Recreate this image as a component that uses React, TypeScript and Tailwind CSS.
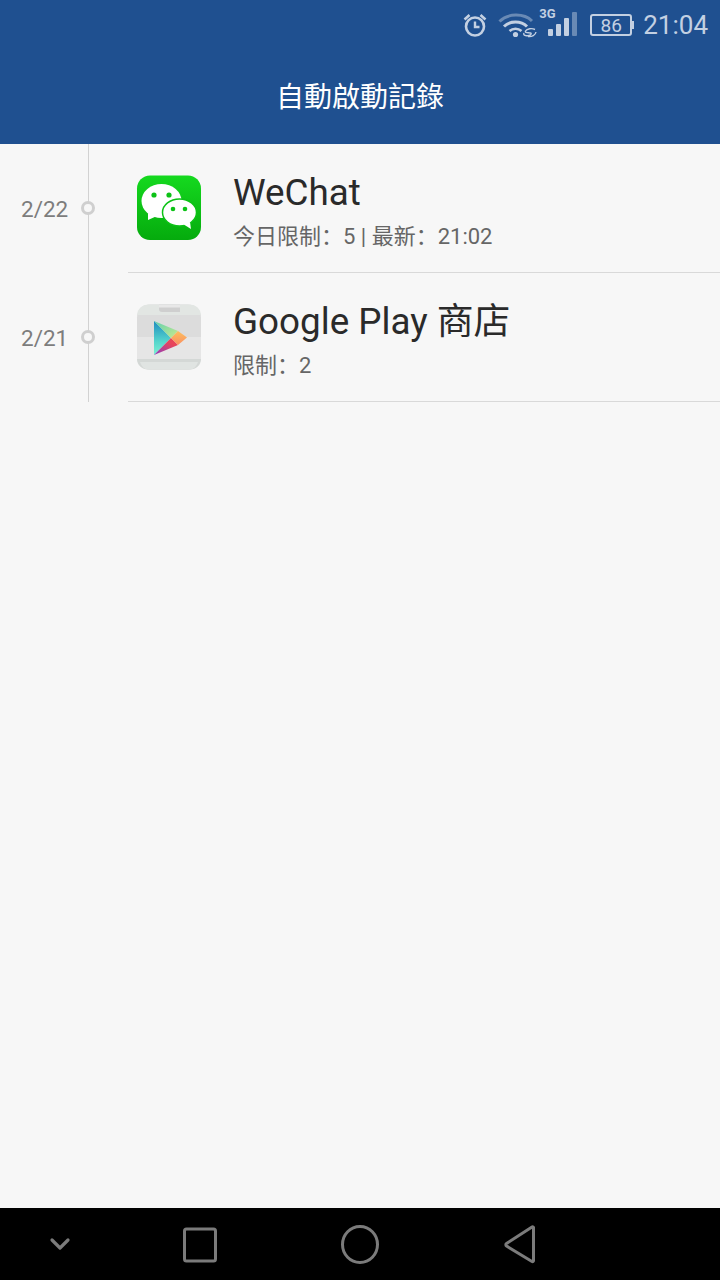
import React from 'react';

const FONT = 'font-["Roboto","Noto_Sans_CJK_SC",sans-serif]';

function StatusBar() {
  return (
    <div className="flex h-[48px] items-center justify-end pr-[12px] pt-[2px] text-[#c3d0e2]">
      {/* alarm */}
      <svg width="26" height="26" viewBox="0 0 26 26" fill="none" stroke="currentColor" className="mr-[10px]">
        <circle cx="13" cy="14.500" r="9" strokeWidth="2.600" />
        <path d="M13 9.500v5.500h4.500" strokeWidth="2.400" />
        <path d="M2.500 7.500 7.500 3M23.500 7.500 18.500 3" strokeWidth="2.600" />
      </svg>
      {/* wifi */}
      <svg width="40" height="26" viewBox="0 0 40 26" fill="none" className="mr-[1px]">
        <path d="M1.500 9.500C10 1 26 1 34 9" stroke="currentColor" strokeOpacity="0.45" strokeWidth="3" />
        <path d="M6 14.500c6-6 17-6 23 0" stroke="currentColor" strokeWidth="3" />
        <path d="M11.500 19c3.500-3 8.500-3 12 0" stroke="currentColor" strokeWidth="2.600" />
        <circle cx="17.500" cy="22.500" r="2.600" fill="currentColor" />
        <path d="M37 17.500c-3-1.500-8-1-9.500 1.500-1 2 3 1.500 5 2 2 .7-.5 3.500-5 2.500-2-.5-2-1.500-1.500-2.500M38 20c-.5 3-4 5-8 4.500" stroke="currentColor" strokeWidth="1.400" />
      </svg>
      {/* cell */}
      <div className="relative mr-[12px] flex h-[36px] w-[39px] items-end gap-[3px] pb-[7px] pl-[9px]">
        <span className={`absolute left-[0px] top-[-1px] text-[13px] font-bold leading-[16px] ${FONT}`}>3G</span>
        <div className="h-[7px] w-[5px] rounded-[1px] bg-[#c3d0e2]" />
        <div className="h-[12px] w-[5px] rounded-[1px] bg-[#c3d0e2]" />
        <div className="h-[18px] w-[5px] rounded-[1px] bg-[#c3d0e2]" />
        <div className="h-[24px] w-[5px] rounded-[1px] bg-[#c3d0e2]/45" />
      </div>
      {/* battery */}
      <div className="mr-[9px] flex items-center">
        <div className={`flex h-[22px] w-[42px] items-center justify-center rounded-[3px] border-2 border-[#c3d0e2] text-[19px] leading-none ${FONT}`}>
          86
        </div>
        <div className="h-[8px] w-[2px] bg-[#c3d0e2]" />
      </div>
      <span className={`text-[26px] leading-none ${FONT}`}>21:04</span>
    </div>
  );
}

function WeChatIcon() {
  return (
    <svg width="66" height="66" viewBox="0 0 66 66">
      <defs>
        <linearGradient id="wc" x1="0" y1="0" x2="0" y2="1">
          <stop offset="0" stopColor="#15d91f" />
          <stop offset="1" stopColor="#05ab0d" />
        </linearGradient>
      </defs>
      <rect x="1" y="0.500" width="64" height="64.500" rx="13" fill="url(#wc)" />
      <ellipse cx="25.500" cy="26" rx="20" ry="17" fill="#fff" />
      <path d="M12 38l0 7 9-4z" fill="#fff" />
      <ellipse cx="43.500" cy="37.500" rx="17" ry="13.500" fill="#fff" stroke="#0cc216" strokeWidth="1.500" />
      <path d="M47 49l8 5-1-7z" fill="#fff" />
      <circle cx="18" cy="20" r="2.600" fill="#0cc216" />
      <circle cx="33" cy="20" r="2.600" fill="#0cc216" />
      <circle cx="37" cy="34" r="2.300" fill="#0cc216" />
      <circle cx="49" cy="34" r="2.300" fill="#0cc216" />
    </svg>
  );
}

function PlayIcon() {
  return (
    <svg width="66" height="66" viewBox="0 0 66 66">
      <defs>
        <linearGradient id="pb" x1="0" y1="0" x2="0" y2="1">
          <stop offset="0" stopColor="#1f8cc0" />
          <stop offset="0.600" stopColor="#55d5cc" />
          <stop offset="1" stopColor="#7ff0d2" />
        </linearGradient>
        <linearGradient id="pg" x1="0" y1="0" x2="1" y2="1">
          <stop offset="0" stopColor="#5fd0b0" />
          <stop offset="1" stopColor="#c8ea8e" />
        </linearGradient>
        <linearGradient id="pr" x1="0" y1="1" x2="1" y2="0">
          <stop offset="0" stopColor="#8a3cc4" />
          <stop offset="0.700" stopColor="#e8455a" />
        </linearGradient>
        <linearGradient id="po" x1="0" y1="0" x2="0" y2="1">
          <stop offset="0" stopColor="#fcc05e" />
          <stop offset="1" stopColor="#fb8f62" />
        </linearGradient>
      </defs>
      <rect x="1" y="0.500" width="64" height="65" rx="13" fill="#dcdcdc" />
      <path d="M1 33h64v20a12 12 0 0 1-12 12H13A12 12 0 0 1 1 53z" fill="#e6e6e6" />
      <path d="M1 11A11 11 0 0 1 12 .5h42a11 11 0 0 1 11 10.500z" fill="#e2e6e3" />
      <path d="M23 .500h21v7.500H26a3 3 0 0 1-3-3z" fill="#cfcfcf" />
      <path d="M23 .500h21v3H23z" fill="#e8e8e8" />
      <path d="M1 55h64c0 6-5 10.500-11 10.500H12C6 65.500 1 61 1 55z" fill="#d4d8d6" />
      <path d="M4 58h58c-1.500 4.500-4.500 7.500-8 7.500H12c-3.500 0-6.500-3-8-7.500z" fill="#e0e4e2" />
      <path d="M18 17L18 51 35 34z" fill="url(#pb)" />
      <path d="M18 17L35 34 42 27z" fill="url(#pg)" />
      <path d="M18 51L35 34 42 41z" fill="url(#pr)" />
      <path d="M42 27L51 33.500 42 41 35 34z" fill="url(#po)" />
    </svg>
  );
}

function Row({ date, icon, title, sub }: { date: string; icon: React.ReactNode; title: string; sub: string }) {
  return (
    <div className="flex h-[129px]">
      <div className="relative flex w-[128px] shrink-0">
        <div className="flex w-[89px] items-start border-r border-[#d2d2d2] pl-[21px] pt-[52px]">
          <span className="text-[22.500px] leading-[26px] text-[#7d7d7d]">{date}</span>
        </div>
        <div className="absolute left-[81px] top-[57px] h-[14px] w-[14px] rounded-full border-[3px] border-[#cfcfcf] bg-[#f7f7f7]" />
      </div>
      <div className="flex flex-1 items-start border-b border-[#d9d9d9]">
        <div className="ml-[8px] mt-[31px]">{icon}</div>
        <div className="ml-[31px] flex flex-col">
          <span className="mt-[27px] text-[36.800px] leading-[44px] text-[#2a2a2a]">{title}</span>
          <span className="mt-[8px] text-[22px] leading-[28px] text-[#666666]">{sub}</span>
        </div>
      </div>
    </div>
  );
}

function NavBar() {
  return (
    <div className="flex h-[72px] items-center bg-black text-[#7b7b7b]">
      <svg width="720" height="72" viewBox="0 0 720 72" fill="none" stroke="currentColor" strokeWidth="3" strokeLinejoin="round">
        <path d="M52 32l8 8 8-8" strokeLinecap="round" strokeWidth="3.200" />
        <rect x="184.500" y="21" width="31" height="32" rx="2" />
        <ellipse cx="360" cy="36.500" rx="17.500" ry="18" />
        <path d="M533.500 19.500v33a1 1 0 0 1-1.500 1L506.500 38a1.500 1.500 0 0 1 0-2.500L532 19a1 1 0 0 1 1.500.5z" />
      </svg>
    </div>
  );
}

export default function App() {
  return (
    <div className={`flex h-[1280px] w-[720px] flex-col overflow-hidden bg-[#f7f7f7] ${FONT}`} style={{ fontFamily: 'Roboto, "Noto Sans CJK SC", sans-serif' }}>
      <div className="h-[144px] bg-[#1f5090]">
        <StatusBar />
        <div className="flex h-[96px] items-center justify-center pt-[4px]">
          <span className="text-[28px] leading-none text-white">自動啟動記錄</span>
        </div>
      </div>
      <div className="flex-1">
        <Row date="2/22" icon={<WeChatIcon />} title="WeChat" sub="今日限制：5 | 最新：21:02" />
        <Row date="2/21" icon={<PlayIcon />} title="Google Play 商店" sub="限制：2" />
      </div>
      <NavBar />
    </div>
  );
}
